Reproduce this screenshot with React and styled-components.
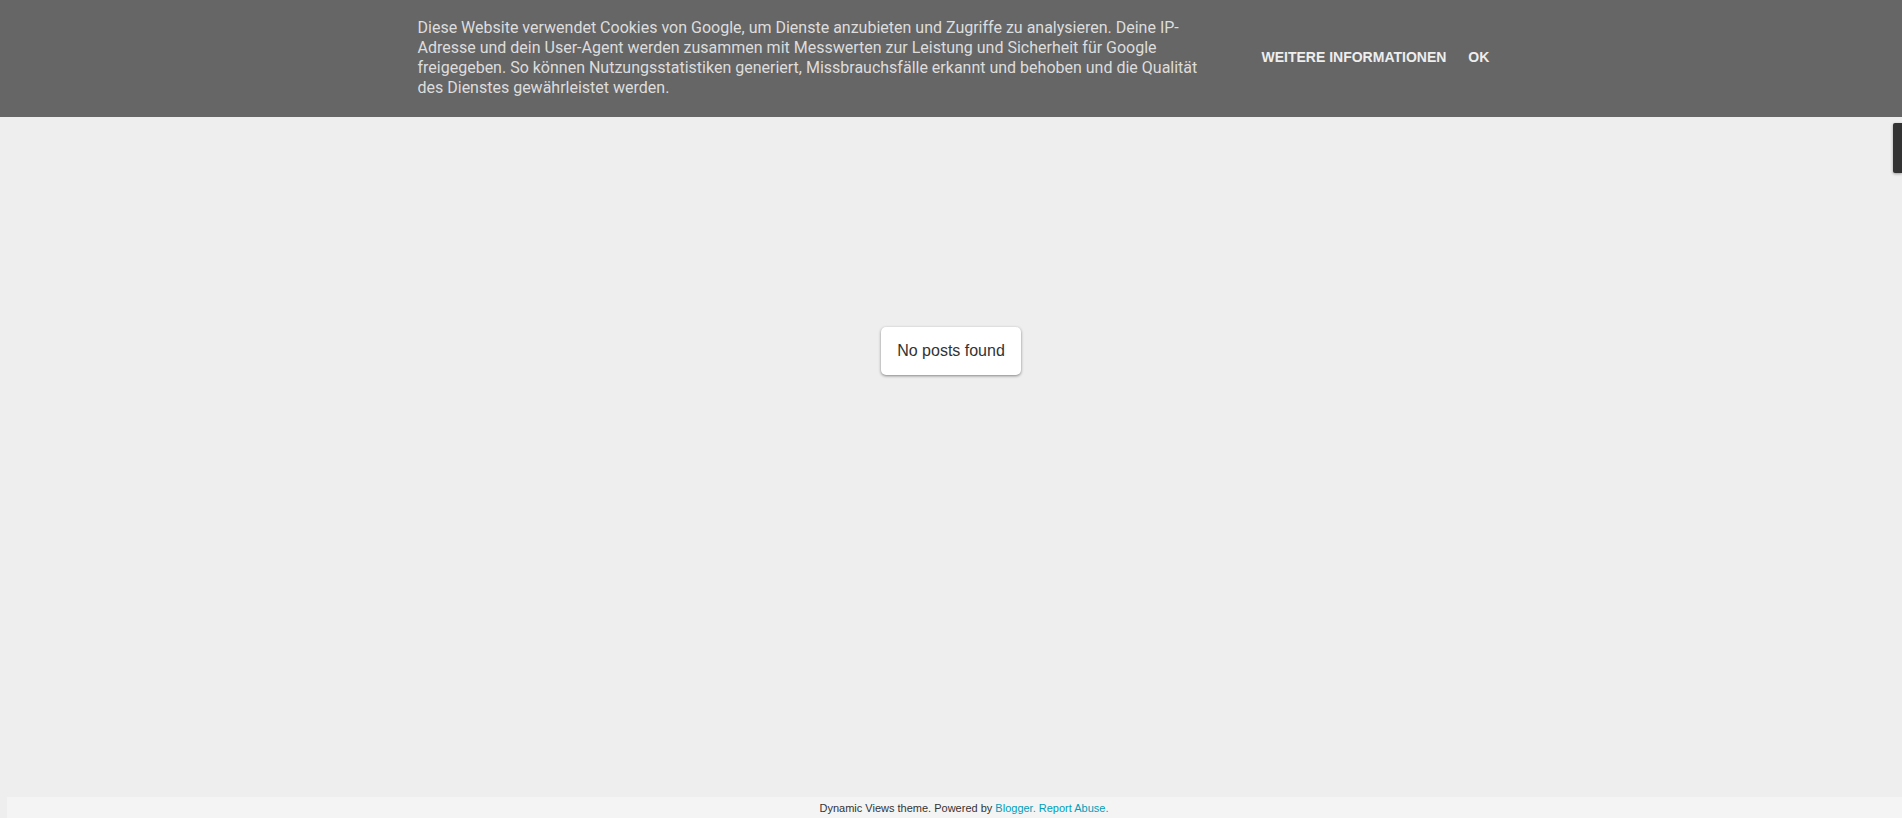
import styled, { createGlobalStyle } from "styled-components";

const GlobalStyle = createGlobalStyle`
    html, body {
        margin: 0;
        padding: 0;
        height: 100%;
    }

    body {
        background: #eeeeee;
        font-family: Arial, "Liberation Sans", sans-serif;
        overflow: hidden;
    }

    #root {
        height: 100%;
    }
`;

const App = () => {
    return (
        <>
            <GlobalStyle />
            <Page>
                <CookieBar>
                    <CookieInner>
                        <CookieText>
                            Diese Website verwendet Cookies von Google, um Dienste anzubieten und Zugriffe zu analysieren. Deine IP-Adresse und dein User-Agent werden zusammen mit Messwerten zur Leistung und Sicherheit für Google freigegeben. So können Nutzungsstatistiken generiert, Missbrauchsfälle erkannt und behoben und die Qualität des Dienstes gewährleistet werden.
                        </CookieText>
                        <CookieButtons>
                            <CookieLink href="#">Weitere Informationen</CookieLink>
                            <CookieLink href="#">OK</CookieLink>
                        </CookieButtons>
                    </CookieInner>
                </CookieBar>

                <Main>
                    <Message>No posts found</Message>
                </Main>

                <Footer>
                    Dynamic Views theme. Powered by <FooterLink href="#">Blogger.</FooterLink>{" "}
                    <FooterLink href="#">Report Abuse.</FooterLink>
                </Footer>

                <SideTab />
            </Page>
        </>
    );
};

export default App;

const Page = styled.div`
    position: relative;
    height: 100%;
    display: flex;
    flex-direction: column;
`;

const CookieBar = styled.div`
    background: #666666;
    height: 117px;
    box-sizing: border-box;
    padding: 18px 0 19px;
    flex-shrink: 0;
`;

const CookieInner = styled.div`
    width: 1070px;
    margin: 0 auto;
    display: flex;
    align-items: center;
    padding-left: 3px;
`;

const CookieText = styled.div`
    width: 796px;
    flex-shrink: 0;
    font-family: Roboto, "Noto Sans", sans-serif;
    font-size: 16px;
    line-height: 20px;
    color: #dddddd;
`;

const CookieButtons = styled.div`
    display: flex;
    flex-shrink: 0;
    white-space: nowrap;
    gap: 22px;
    margin-left: 48px;
    margin-bottom: 2px;
`;

const CookieLink = styled.a`
    font-family: Arial, "Liberation Sans", sans-serif;
    font-size: 14px;
    font-weight: bold;
    text-transform: uppercase;
    color: #eeeeee;
    text-decoration: none;
    line-height: 16px;
`;

const Main = styled.div`
    flex: 1;
    display: flex;
    justify-content: center;
    align-items: flex-start;
    padding-top: 210px;
`;

const Message = styled.div`
    background: #ffffff;
    color: #333333;
    font-family: Arial, "Liberation Sans", sans-serif;
    font-size: 16px;
    line-height: 18px;
    padding: 15px 16px;
    border-radius: 5px;
    box-shadow: 0 1px 3px rgba(0, 0, 0, 0.45);
`;

const Footer = styled.div`
    flex-shrink: 0;
    height: 21px;
    margin-left: 7px;
    padding-left: 19px;
    background: #f4f4f4;
    color: #333333;
    font-family: Arial, "Liberation Sans", sans-serif;
    font-size: 11px;
    line-height: 23px;
    text-align: center;
`;

const FooterLink = styled.a`
    color: #009eb8;
    text-decoration: none;
`;

const SideTab = styled.div`
    position: absolute;
    top: 123px;
    right: 0;
    width: 9px;
    height: 50px;
    background: #333333;
    border-radius: 2px 0 0 2px;
    box-shadow: 0 1px 3px rgba(0, 0, 0, 0.35);
`;
